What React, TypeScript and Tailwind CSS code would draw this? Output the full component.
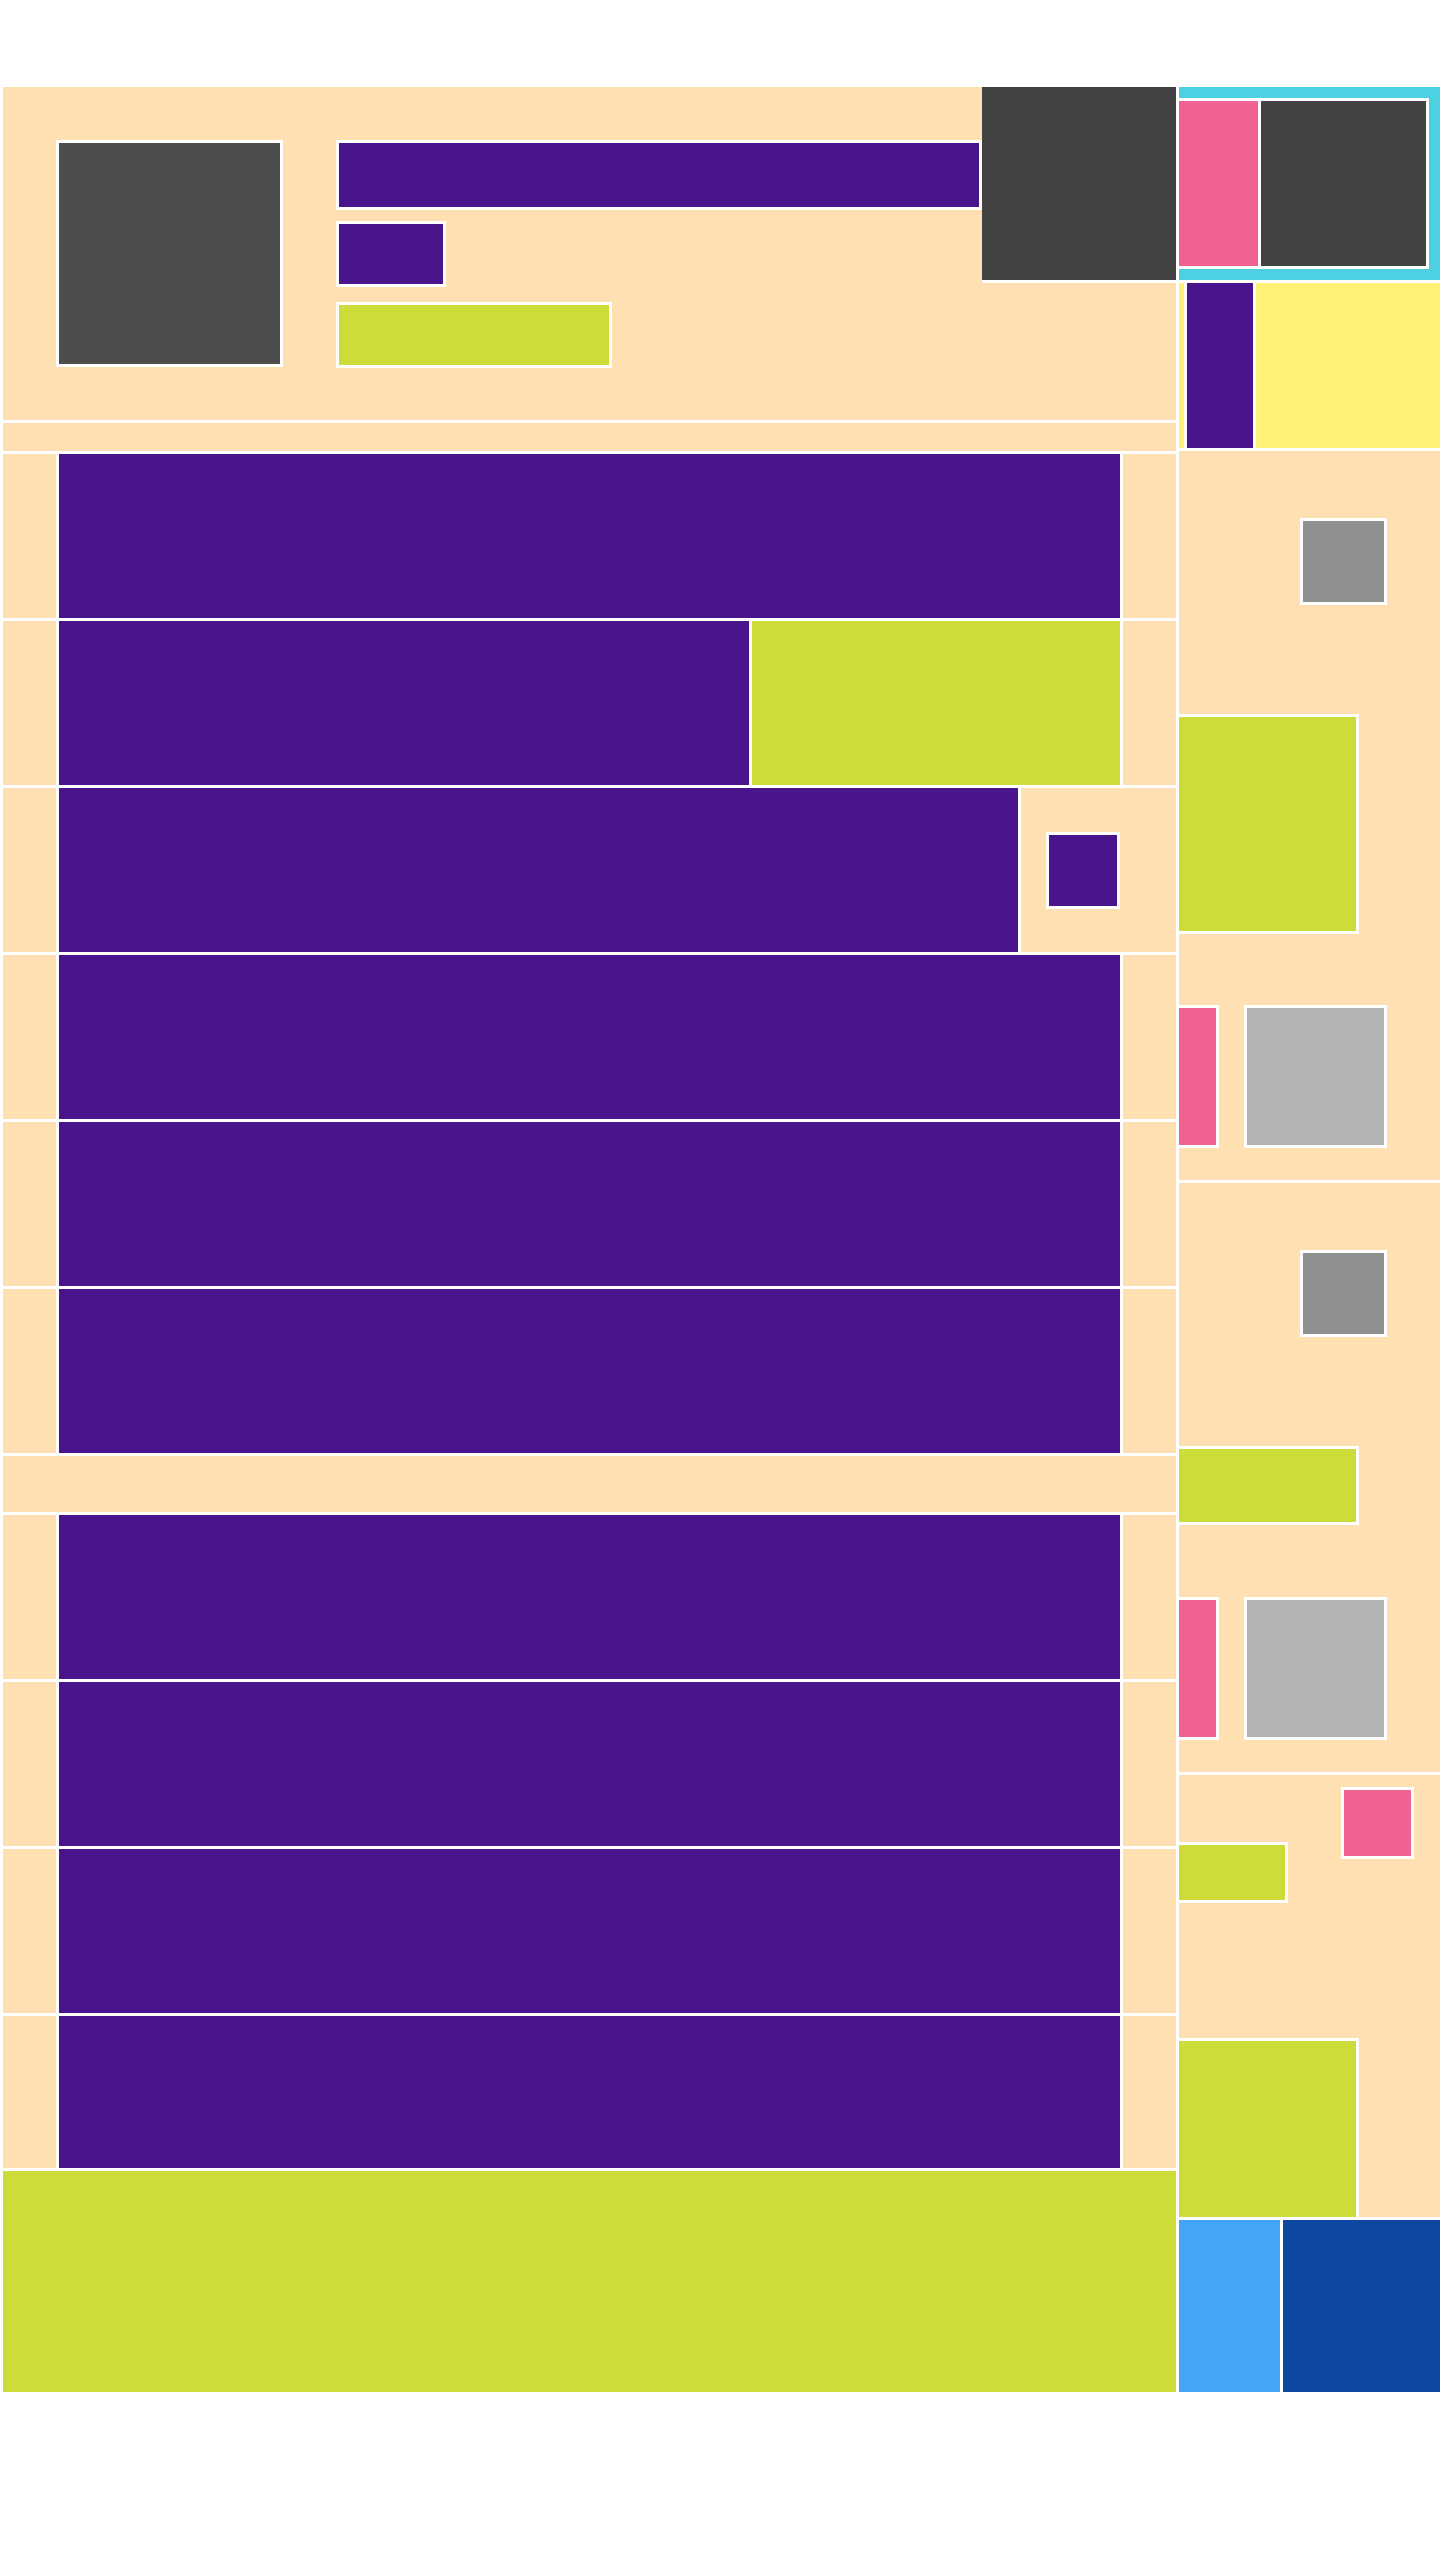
import React from 'react';

type RowKind = 'full' | 'split' | 'badge';

const topRows: { kind: RowKind; h: string }[] = [
  { kind: 'full', h: 'h-[164px]' },
  { kind: 'split', h: 'h-[164px]' },
  { kind: 'badge', h: 'h-[164px]' },
  { kind: 'full', h: 'h-[164px]' },
  { kind: 'full', h: 'h-[164px]' },
  { kind: 'full', h: 'h-[164px]' },
];

const bottomRows: { kind: RowKind; h: string }[] = [
  { kind: 'full', h: 'h-[164px]' },
  { kind: 'full', h: 'h-[164px]' },
  { kind: 'full', h: 'h-[164px]' },
  { kind: 'full', h: 'h-[152px]' },
];

function ListRow({ kind, h }: { kind: RowKind; h: string }) {
  return (
    <div className={`flex gap-[3px] bg-white ${h}`}>
      <div className="w-[53px] shrink-0 bg-[#ffe0b2]" />
      {kind === 'full' && (
        <>
          <div className="w-[1061px] shrink-0 bg-[#4a148c]" />
          <div className="w-[53px] shrink-0 bg-[#ffe0b2]" />
        </>
      )}
      {kind === 'split' && (
        <>
          <div className="w-[690px] shrink-0 bg-[#4a148c]" />
          <div className="w-[368px] shrink-0 bg-[#cddc39]" />
          <div className="w-[53px] shrink-0 bg-[#ffe0b2]" />
        </>
      )}
      {kind === 'badge' && (
        <>
          <div className="w-[959px] shrink-0 bg-[#4a148c]" />
          <div className="flex w-[155px] shrink-0 items-center bg-[#ffe0b2] pl-[25px]">
            <div className="h-[77px] w-[74px] border-[3px] border-white bg-[#4a148c]" />
          </div>
        </>
      )}
    </div>
  );
}

// Sidebar card: thumbnail, title block, then a tag + preview pair
function SideCard({ titleH, titleMt, h }: { titleH: string; titleMt: string; h: string }) {
  return (
    <div className={`flex flex-col bg-[#ffe0b2] ${h}`}>
      <div className="ml-[121px] mt-[67px] h-[87px] w-[87px] border-[3px] border-white bg-[#8f8f8f]" />
      <div className={`mt-[109px] w-[180px] border-y-[3px] border-r-[3px] border-white bg-[#cddc39] ${titleH}`} />
      <div className={`flex items-start ${titleMt}`}>
        <div className="h-[143px] w-[40px] border-y-[3px] border-r-[3px] border-white bg-[#f06292]" />
        <div className="ml-[25px] h-[143px] w-[143px] border-[3px] border-white bg-[#b3b3b3]" />
      </div>
    </div>
  );
}

export default function App() {
  return (
    <div className="flex min-h-screen gap-[3px] bg-white pl-[3px] pt-[87px]">
      {/* Main column */}
      <div className="flex w-[1173px] shrink-0 flex-col gap-[3px]">
        {/* Header */}
        <div className="flex h-[333px] items-start bg-[#ffe0b2] pl-[53px]">
          <div className="mt-[53px] h-[227px] w-[227px] shrink-0 border-[3px] border-white bg-[#4d4d4d]" />
          <div className="ml-[53px] mt-[53px] flex w-[646px] shrink-0 flex-col">
            <div className="h-[70px] w-full border-[3px] border-white bg-[#4a148c]" />
            <div className="mt-[11px] h-[66px] w-[110px] border-[3px] border-white bg-[#4a148c]" />
            <div className="mt-[15px] h-[66px] w-[276px] border-[3px] border-white bg-[#cddc39]" />
          </div>
          <div className="h-[196px] w-[194px] shrink-0 border-b-[3px] border-white bg-[#424242]" />
        </div>

        <div className="h-[28px] bg-[#ffe0b2]" />

        <div className="flex flex-col gap-[3px]">
          {topRows.map((r, i) => (
            <ListRow key={i} kind={r.kind} h={r.h} />
          ))}
        </div>

        <div className="h-[56px] bg-[#ffe0b2]" />

        <div className="flex flex-col gap-[3px]">
          {bottomRows.map((r, i) => (
            <ListRow key={i} kind={r.kind} h={r.h} />
          ))}
        </div>

        {/* Footer */}
        <div className="h-[221px] bg-[#cddc39]" />
      </div>

      {/* Sidebar */}
      <div className="flex w-[261px] shrink-0 flex-col gap-[3px]">
        <div className="h-[193px] bg-[#4dd0e1] py-[11px] pr-[11px]">
          <div className="flex h-[171px] w-[250px] border-y-[3px] border-r-[3px] border-white bg-white">
            <div className="w-[79px] shrink-0 bg-[#f06292]" />
            <div className="ml-[3px] w-[165px] shrink-0 bg-[#424242]" />
          </div>
        </div>

        <div className="flex h-[165px] bg-[#fff176] pl-[5px]">
          <div className="w-[72px] border-x-[3px] border-white bg-[#4a148c]" />
        </div>

        <SideCard h="h-[729px]" titleH="h-[220px]" titleMt="mt-[71px]" />
        <SideCard h="h-[589px]" titleH="h-[79px]" titleMt="mt-[72px]" />

        <div className="flex h-[442px] flex-col bg-[#ffe0b2]">
          <div className="flex items-start">
            <div className="mt-[67px] h-[61px] w-[109px] border-y-[3px] border-r-[3px] border-white bg-[#cddc39]" />
            <div className="ml-[53px] mt-[12px] h-[72px] w-[73px] border-[3px] border-white bg-[#f06292]" />
          </div>
          <div className="mt-auto h-[179px] w-[180px] border-r-[3px] border-t-[3px] border-white bg-[#cddc39]" />
        </div>

        <div className="flex h-[172px] gap-[3px]">
          <div className="w-[101px] bg-[#42a5f5]" />
          <div className="w-[157px] bg-[#0d47a1]" />
        </div>
      </div>
    </div>
  );
}
